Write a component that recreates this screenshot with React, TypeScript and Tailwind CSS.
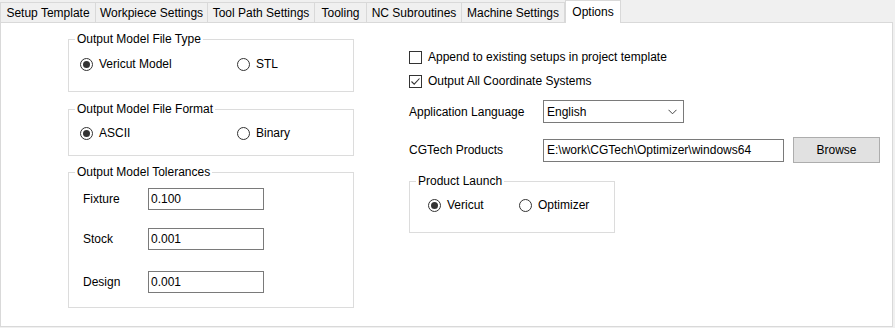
import React from "react";

const font = { fontFamily: '"Liberation Sans", Arial, sans-serif' };

function Radio({ checked, label }: { checked?: boolean; label: string }) {
  return (
    <div className="flex items-center gap-[6px]">
      <span className="flex h-[13px] w-[13px] items-center justify-center rounded-full border border-[#333333] bg-white">
        {checked && <span className="h-[7px] w-[7px] rounded-full bg-[#333333]" />}
      </span>
      <span>{label}</span>
    </div>
  );
}

function Group({ title, className, children }: { title: string; className: string; children: React.ReactNode }) {
  return (
    <div className={"relative border border-[#dcdcdc] " + className}>
      <span className="absolute -top-[9px] left-[6px] bg-white px-[2px] leading-[16px]">{title}</span>
      {children}
    </div>
  );
}

function Check({ checked, label }: { checked?: boolean; label: string }) {
  return (
    <div className="flex h-[16px] items-center gap-[6px]">
      <span className="flex h-[13px] w-[13px] items-center justify-center border border-[#333333] bg-white">
        {checked && (
          <svg width="11" height="11" viewBox="0 0 11 11">
            <path d="M1.5 5.5 L4.2 8.2 L9.5 2.5" fill="none" stroke="#333333" strokeWidth="1.1" />
          </svg>
        )}
      </span>
      <span>{label}</span>
    </div>
  );
}

const tabs = [
  { label: "Setup Template", w: 96 },
  { label: "Workpiece Settings", w: 112 },
  { label: "Tool Path Settings", w: 107 },
  { label: "Tooling", w: 52 },
  { label: "NC Subroutines", w: 95 },
  { label: "Machine Settings", w: 103 },
];

export default function App() {
  return (
    <div className="h-[328px] w-[895px] bg-[#f0f0f0] text-[12px] text-black" style={font}>
      <div className="flex h-[22px] items-end">
        {tabs.map((t, i) => (
          <div
            key={t.label}
            style={{ width: t.w }}
            className={
              "flex h-[20px] items-center justify-center border-t border-r border-[#d9d9d9] bg-[#f0f0f0] leading-none " +
              (i === 0 ? "border-l" : "")
            }
          >
            {t.label}
          </div>
        ))}
        <div className="relative z-10 -mb-px flex h-[23px] w-[56px] items-start justify-center border-x border-t border-[#d9d9d9] bg-white pt-[5px] leading-none">
          Options
        </div>
      </div>
      <div className="flex h-[305px] w-[893px] border border-[#d9d9d9] bg-white">
        <div className="ml-[67px] flex w-[286px] flex-col">
          <Group title="Output Model File Type" className="mt-[16px] h-[53px]">
            <div className="mt-[15px] flex pl-[11px]">
              <div className="w-[157px]">
                <Radio checked label="Vericut Model" />
              </div>
              <Radio label="STL" />
            </div>
          </Group>
          <Group title="Output Model File Format" className="mt-[17px] h-[47px]">
            <div className="mt-[14px] flex pl-[11px]">
              <div className="w-[157px]">
                <Radio checked label="ASCII" />
              </div>
              <Radio label="Binary" />
            </div>
          </Group>
          <Group title="Output Model Tolerances" className="mt-[16px] h-[136px]">
            <div className="flex flex-col pl-[14px] pt-[15px]">
              {[
                ["Fixture", "0.100", ""],
                ["Stock", "0.001", "mt-[18px]"],
                ["Design", "0.001", "mt-[21px]"],
              ].map(([l, v, m]) => (
                <div key={l} className={"flex h-[22px] items-center " + m}>
                  <span className="w-[65px]">{l}</span>
                  <div className="flex h-[22px] w-[116px] items-center border border-[#7a7a7a] pl-[2px]">{v}</div>
                </div>
              ))}
            </div>
          </Group>
        </div>
        <div className="ml-[55px] flex flex-col">
          <div className="mt-[26px]">
            <Check label="Append to existing setups in project template" />
          </div>
          <div className="mt-[8px]">
            <Check checked label="Output All Coordinate Systems" />
          </div>
          <div className="mt-[11px] flex h-[23px] items-center">
            <span className="w-[134px]">Application Language</span>
            <div className="flex h-[23px] w-[141px] items-center justify-between border border-[#7a7a7a] pl-[3px] pr-[6px]">
              <span>English</span>
              <svg width="9" height="6" viewBox="0 0 9 6">
                <path d="M0.5 0.8 L4.5 4.8 L8.5 0.8" fill="none" stroke="#444" strokeWidth="1" />
              </svg>
            </div>
          </div>
          <div className="mt-[14px] flex h-[26px] items-center">
            <span className="w-[134px]">CGTech Products</span>
            <div className="flex h-[23px] w-[241px] items-center border border-[#7a7a7a] pl-[3px]">
              E:\work\CGTech\Optimizer\windows64
            </div>
            <button className="ml-[9px] flex h-[26px] w-[87px] items-center justify-center border border-[#adadad] bg-[#e1e1e1]">
              Browse
            </button>
          </div>
          <Group title="Product Launch" className="mt-[18px] h-[52px] w-[206px]">
            <div className="mt-[14px] flex pl-[18px]">
              <div className="w-[91px]">
                <Radio checked label="Vericut" />
              </div>
              <Radio label="Optimizer" />
            </div>
          </Group>
        </div>
      </div>
    </div>
  );
}
